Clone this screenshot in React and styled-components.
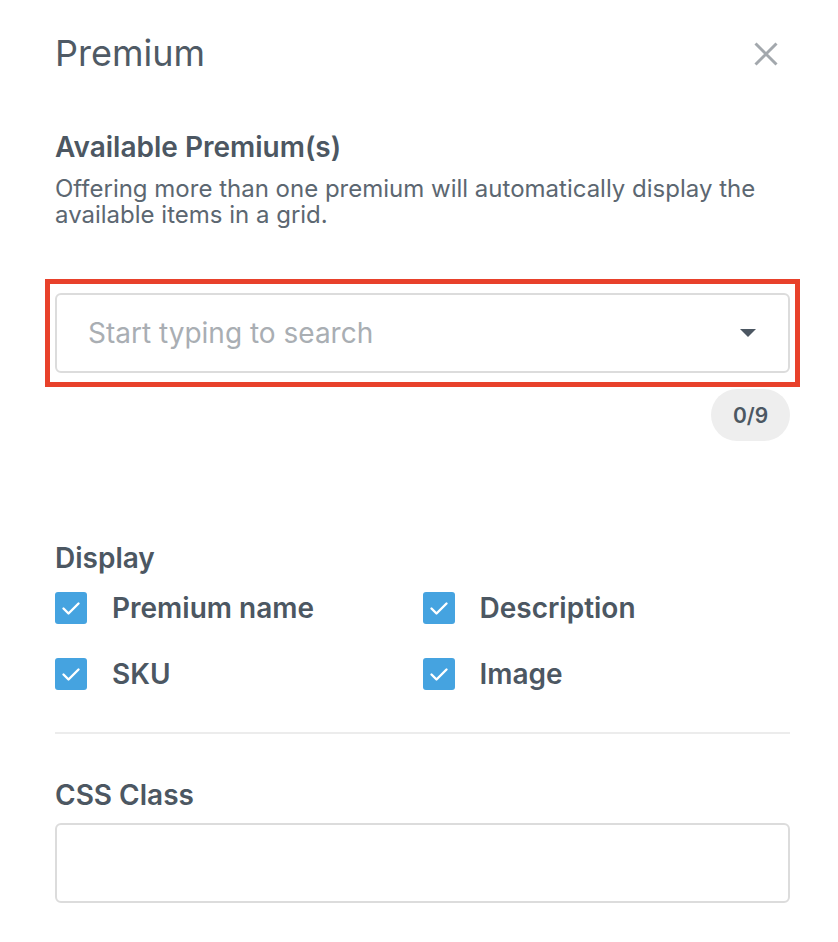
import styled, { createGlobalStyle } from "styled-components";

const GlobalStyle = createGlobalStyle`
  body {
    margin: 0;
    background: #ffffff;
    font-family: Inter, "Noto Sans", "Liberation Sans", sans-serif;
    color: #4c5762;
  }
`;

const options = [
  { label: "Premium name", checked: true },
  { label: "Description", checked: true },
  { label: "SKU", checked: true },
  { label: "Image", checked: true },
];

function CheckIcon() {
  return (
    <svg width="32" height="32" viewBox="0 0 32 32">
      <polyline
        points="8.5,16.5 13.5,21.5 23.5,11.5"
        fill="none"
        stroke="#ffffff"
        strokeWidth="2.4"
        strokeLinecap="round"
        strokeLinejoin="round"
      />
    </svg>
  );
}

export default function App() {
  return (
    <>
      <GlobalStyle />
      <Panel>
        <Header>
          <Title>Premium</Title>
          <CloseButton aria-label="Close">
            <svg width="24" height="24" viewBox="0 0 24 24">
              <path d="M1.5 1.5 L22.5 22.5 M22.5 1.5 L1.5 22.5" stroke="#a3a8ad" strokeWidth="3" />
            </svg>
          </CloseButton>
        </Header>

        <SectionTitle $top={55}>Available Premium(s)</SectionTitle>
        <Description>
          Offering more than one premium will automatically display the
          available items in a grid.
        </Description>

        <Highlight>
          <SelectBox>
            <Placeholder>Start typing to search</Placeholder>
            <Caret />
          </SelectBox>
        </Highlight>

        <CounterRow>
          <Counter>0/9</Counter>
        </CounterRow>

        <SectionTitle $top={100}>Display</SectionTitle>
        <OptionGrid>
          {options.map((o) => (
            <Option key={o.label}>
              <Checkbox $checked={o.checked}>
                <CheckIcon />
              </Checkbox>
              <span>{o.label}</span>
            </Option>
          ))}
        </OptionGrid>

        <Divider />

        <SectionTitle $top={44}>CSS Class</SectionTitle>
        <TextField />
      </Panel>
    </>
  );
}

const Panel = styled.div`
  width: 735px;
  padding: 31px 0 40px 55px;
`

const Header = styled.div`
  display: flex;
  justify-content: space-between;
  align-items: center;
`

const Title = styled.h1`
  margin: 0;
  font-size: 36px;
  line-height: 44px;
  font-weight: 400;
  color: #4f5a65;
`

const CloseButton = styled.div`
  display: flex;
  margin-right: 12px;
  margin-top: 2px;
`

const SectionTitle = styled.h2`
  margin: ${(p) => p.$top}px 0 0;
  font-size: 28px;
  line-height: 34px;
  font-weight: 600;
  color: #4c5762;
`

const Description = styled.p`
  margin: 12px 0 0;
  font-size: 24px;
  line-height: 26px;
  color: #5c6771;
`

const Highlight = styled.div`
  margin: 51px -10px 0;
  padding: 9px 5px;
  border: 5px solid #e8412b;
`

const SelectBox = styled.div`
  height: 80px;
  box-sizing: border-box;
  border: 2px solid #dcdcdc;
  border-radius: 6px;
  display: flex;
  align-items: center;
  justify-content: space-between;
  padding: 0 32px 0 31px;
`

const Placeholder = styled.span`
  font-size: 28px;
  color: #a9aeb3;
`

const Caret = styled.span`
  width: 0;
  height: 0;
  border-left: 8px solid transparent;
  border-right: 8px solid transparent;
  border-top: 8px solid #4c5762;
`

const CounterRow = styled.div`
  display: flex;
  justify-content: flex-end;
  margin-top: 2px;
`

const Counter = styled.span`
  height: 52px;
  min-width: 79px;
  box-sizing: border-box;
  border-radius: 26px;
  background: #eeeeee;
  display: flex;
  align-items: center;
  justify-content: center;
  font-size: 21px;
  font-weight: 600;
  color: #4c5762;
`

const OptionGrid = styled.div`
  margin-top: 17px;
  display: grid;
  grid-template-columns: 1fr 1fr;
  row-gap: 34px;
`

const Option = styled.label`
  display: flex;
  align-items: center;
  gap: 25px;
  height: 32px;
  font-size: 28px;
  line-height: 32px;
  font-weight: 600;
  color: #4c5762;
`

const Checkbox = styled.span`
  width: 32px;
  height: 32px;
  border-radius: 3px;
  background: ${(p) => (p.$checked ? "#45a3e0" : "#ffffff")};
  display: flex;
  flex-shrink: 0;
`

const Divider = styled.hr`
  margin: 42px 0 0;
  border: none;
  height: 2px;
  background: #ececec;
`

const TextField = styled.div`
  margin-top: 11px;
  height: 80px;
  box-sizing: border-box;
  border: 2px solid #dcdcdc;
  border-radius: 6px;
`
